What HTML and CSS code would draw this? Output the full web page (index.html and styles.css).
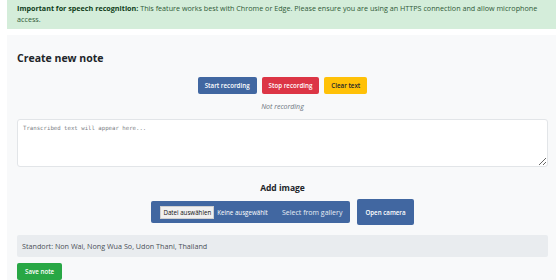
FILE: index.html
```html
<!DOCTYPE html>
<html>
<head>
    <title>Notes</title>
    <link rel="stylesheet" href="styles.css">
</head>
<body>
    <div class="alert">
        <strong>Important for speech recognition:</strong> This feature works best with Chrome or Edge. Please ensure you are using an HTTPS connection and allow microphone access.
    </div>

    <div class="card">
        <h2>Create new note</h2>

        <div class="controls">
            <button class="btn btn-primary">Start recording</button>
            <button class="btn btn-danger">Stop recording</button>
            <button class="btn btn-warning">Clear text</button>
        </div>
        <div class="status">Not recording</div>

        <textarea class="transcript" placeholder="Transcribed text will appear here..."></textarea>

        <h3>Add image</h3>
        <div class="image-row">
            <label class="file-box">
                <span class="file-btn">Datei auswählen</span>
                <span class="file-name">Keine ausgewählt</span>
                <span class="file-label">Select from gallery</span>
            </label>
            <button class="btn btn-primary btn-camera">Open camera</button>
        </div>

        <div class="location">Standort: Non Wai, Nong Wua So, Udon Thani, Thailand</div>

        <button class="btn btn-success">Save note</button>
    </div>
</body>
</html>
```

FILE: styles.css
```css
body {
    font-family: "Open Sans", "Noto Sans", sans-serif;
    margin: 0;
    padding: 0 4px 0 7px;
    background: #fff;
    color: #212529;
}
.alert {
    background-color: #d4edda;
    color: #2f5a37;
    font-size: 7.2px;
    line-height: 11px;
    padding: 3px 10px 4px 10px;
}
.alert strong {
    color: #0f3d19;
}
.card {
    margin-top: 6px;
    background-color: #f8f9fa;
    padding: 10px 8px 2px 10px;
}
h2 {
    font-size: 10.5px;
    margin: 6px 0 12px 0;
}
.controls {
    display: flex;
    justify-content: center;
    gap: 5px;
}
.btn {
    font-family: inherit;
    font-size: 6.2px;
    font-weight: 600;
    border: none;
    border-radius: 2px;
    padding: 0 7px;
    height: 17px;
    color: #fff;
    cursor: pointer;
}
.btn-primary {
    background-color: #4167a1;
}
.btn-danger {
    background-color: #dc3545;
}
.btn-warning {
    background-color: #ffc107;
    color: #212529;
}
.btn-success {
    background-color: #28a745;
    height: 17px;
    padding: 0 8px;
    display: block;
    margin-top: 6px;
}
.status {
    text-align: center;
    font-style: italic;
    color: #6c757d;
    font-size: 7px;
    margin: 8px 0 8px 0;
}
.transcript {
    display: block;
    box-sizing: border-box;
    width: 100%;
    height: 48px;
    border: 1px solid #e2e5e8;
    border-radius: 3px;
    background: #fff;
    font-family: "DejaVu Sans Mono", monospace;
    font-size: 5.7px;
    padding: 5px 5px;
    resize: vertical;
}
.transcript::placeholder {
    color: #7b8085;
}
h3 {
    text-align: center;
    font-size: 8.5px;
    margin: 15px 0 6px 0;
}
.image-row {
    display: flex;
    justify-content: center;
    align-items: center;
    gap: 7px;
}
.file-box {
    display: flex;
    align-items: center;
    background-color: #4167a1;
    color: #fff;
    height: 22px;
    width: 199px;
    box-sizing: border-box;
    border-radius: 2px;
    padding: 0 8px 0 9px;
    font-size: 6.2px;
}
.file-btn {
    background: #f0f0f0;
    color: #111;
    padding: 1px 2px;
    border: 1px solid #d0d0d0;
}
.file-name {
    margin-left: 3px;
}
.file-label {
    margin-left: auto;
    font-size: 7px;
    color: #e8edf5;
}
.btn-camera {
    height: 26px;
    padding: 0 8px;
}
.location {
    margin-top: 10px;
    background-color: #e9ecef;
    color: #495057;
    font-size: 7.2px;
    height: 22px;
    line-height: 22px;
    padding: 0 5px;
    border-radius: 2px;
}
```
